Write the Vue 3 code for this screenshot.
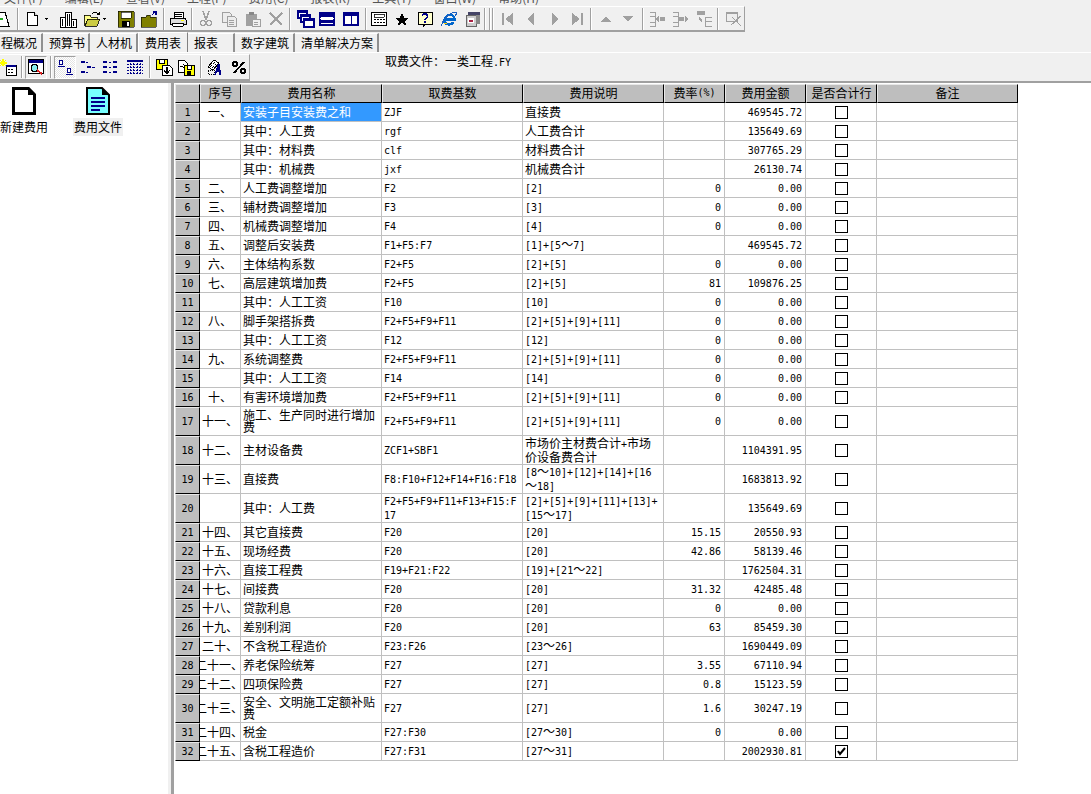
<template>
  <div class="app">
    <div class="menu">
      <span v-for="m in menus" :key="m">{{ m }}</span>
    </div>

    <div class="toolbar main-bar">
      <template v-for="(item, i) in placedMain" :key="i">
        <i v-if="item.sep" class="sep" :style="{ marginLeft: item.ml + 'px' }"></i>
        <svg
          v-else
          class="icon"
          viewBox="0 0 16 16"
          :width="item.w"
          height="16"
          :style="{ marginLeft: item.ml + 'px' }"
          v-html="icons[item.icon]"
        ></svg>
      </template>
    </div>

    <div class="tabs">
      <div
        v-for="t in tabs"
        :key="t.name"
        class="tab"
        :class="{ active: t.active }"
        :style="{ width: t.w + 'px' }"
      >
        {{ t.name }}
      </div>
    </div>

    <div class="sub-row">
      <div class="toolbar sub-bar">
        <template v-for="(item, i) in placedSub" :key="i">
          <i v-if="item.sep" class="sep" :style="{ marginLeft: item.ml + 'px' }"></i>
          <span
            v-else
            class="tool"
            :class="{ pressed: item.pressed, dither: item.dither }"
            :style="{ marginLeft: item.ml + 'px', width: item.w + 'px' }"
          >
            <svg class="icon" viewBox="0 0 16 16" width="16" height="16" v-html="icons[item.icon]"></svg>
          </span>
        </template>
      </div>
      <div class="file-name">
        取费文件：一类工程<span class="lat">.FY</span>
      </div>
    </div>

    <div class="body">
      <aside class="side">
        <div class="side-item">
          <svg viewBox="0 0 24 28" width="24" height="28">
            <path d="M1.5 1.5h15l6 6v19h-21z" fill="#fff" stroke="#000" stroke-width="3" />
            <path d="M16 1v7h7" fill="#000" />
          </svg>
          <span>新建费用</span>
        </div>
        <div class="side-item">
          <svg viewBox="0 0 24 28" width="24" height="28">
            <path d="M1 1h15l7 7v19H1z" fill="#7ff" stroke="#000" stroke-width="2" />
            <path d="M16 1v7h7" fill="#000" />
            <path d="M5 10h14v2H5zM5 14h14v2H5zM5 18h14v2H5zM5 22h9v2H5z" fill="#008" />
          </svg>
          <span class="selected-label">费用文件</span>
        </div>
      </aside>

      <div class="splitter"></div>

      <div class="grid">
        <div class="row head-row">
          <div class="rh corner"></div>
          <div v-for="h in headers" :key="h" class="hc">
            <span v-for="p in parts(h)" :key="p.t" :class="{ lat: p.lat }">{{ p.t }}</span>
          </div>
        </div>

        <div v-for="(r, i) in rows" :key="i" class="row" :class="{ tall: r.tall }">
          <div class="rh"><span class="lat">{{ i + 1 }}</span></div>
          <div class="cell no" :class="{ over: r.no.length > 3 }">{{ r.no }}</div>
          <div class="cell" :class="{ sel: i === 0 }"><div class="txt">{{ r.name }}</div></div>
          <div class="cell">
            <div class="txt">
              <span v-for="p in parts(r.base)" :key="p.t" :class="{ lat: p.lat }">{{ p.t }}</span>
            </div>
          </div>
          <div class="cell">
            <div class="txt">
              <span v-for="(p, k) in parts(r.desc)" :key="k" :class="{ lat: p.lat }">{{ p.t }}</span>
            </div>
          </div>
          <div class="cell right"><span class="lat">{{ r.rate }}</span></div>
          <div class="cell right"><span class="lat">{{ r.amount }}</span></div>
          <div class="cell center">
            <span class="check">
              <svg v-if="i === rows.length - 1" viewBox="0 0 11 11" width="11" height="11">
                <path d="M2 5l2 3 5-6" fill="none" stroke="#000" stroke-width="2" />
              </svg>
            </span>
          </div>
          <div class="cell"></div>
        </div>
      </div>
    </div>
  </div>
</template>

<script setup>
const menus = ['文件(F)', '编辑(E)', '查看(V)', '工程(P)', '费用(C)', '报表(R)', '工具(T)', '窗口(W)', '帮助(H)']

const D = '#a0a0a0'
const icons = {
  map: '<path d="M1 1h10l4 14H5z" fill="#fff" stroke="#000"/><path d="M3 4h3v2H3z" fill="#d22"/><path d="M6 7h3v2H6z" fill="#2a2"/><path d="M3 8h2v2H3z" fill="#dc2"/>',
  doc: '<path d="M2.5 1.5h7l3 3v10h-10z" fill="#fff" stroke="#000"/><path d="M9.5 1.500v3h3" fill="#ccc" stroke="#000"/>',
  drop: '<path d="M0 6h7L3.5 10z" fill="#000"/>',
  building: '<path d="M0 6h5v10H0zM5 1h6v15H5zM11 8h5v8h-5z" fill="#fff" stroke="#000"/><path d="M2 8h1v7H2zM7 3h1v12H7zM9 3h1v12H9zM13 10h1v5h-1z" fill="#000"/>',
  open: '<path d="M0 4h6l1 2h6v2H4L1 14H0z" fill="#ff8" stroke="#000" stroke-width=".8"/><path d="M4 8h12l-3 7H1z" fill="#cc4" stroke="#000" stroke-width=".8"/><path d="M8 3c1-2 4-3 6 0" fill="none" stroke="#000"/><path d="M12 4h4V1z" fill="#000"/>',
  save: '<path d="M0 0h15l1 1v15H0z" fill="#808000" stroke="#000" stroke-width=".6"/><path d="M3 1h10v6H3z" fill="#fff" stroke="#000" stroke-width=".6"/><path d="M4 10h8v6H4z" fill="#000"/><path d="M9 11h2v4H9z" fill="#fff"/>',
  folder: '<path d="M0 6h5l1-2h3v2h6v10H0z" fill="#808000" stroke="#000" stroke-width=".6"/><path d="M11 4l3-3M12 1h3v3" fill="none" stroke="#008" stroke-width="1.4"/>',
  print: '<path d="M4 1h9v6H4z" fill="#fff" stroke="#000"/><path d="M1 7h14l1 2v4H0V9z" fill="#ddd" stroke="#000"/><path d="M2 12h12l-1 3H3z" fill="#fff" stroke="#000"/><path d="M5 3h7M5 5h7" stroke="#000"/><path d="M11 9h3v1h-3z" fill="#ff0"/>',
  cut: `<path d="M5 0l3 9M11 0L8 9" stroke="${D}" stroke-width="1.4" fill="none"/><circle cx="5" cy="12" r="2.4" fill="none" stroke="${D}" stroke-width="1.4"/><circle cx="11" cy="12" r="2.4" fill="none" stroke="${D}" stroke-width="1.4"/>`,
  copy: `<path d="M1 1h7l2 2v8H1z" fill="#ececec" stroke="${D}"/><path d="M6 5h7l2 2v8H6z" fill="#ececec" stroke="${D}"/><path d="M8 9h5M8 11h5M8 13h5" stroke="${D}"/>`,
  paste: `<path d="M1 3h11v12H1z" fill="${D}"/><path d="M4 1h5v3H4z" fill="#888"/><path d="M7 8h8v7H7z" fill="#f0f0f0" stroke="${D}"/><path d="M9 11h4M9 13h4" stroke="${D}"/>`,
  cross: `<path d="M2 2l12 12M14 2L2 14" stroke="${D}" stroke-width="2.4"/>`,
  cascade: '<path d="M0 0h9v7H0z" fill="#fff" stroke="#008" stroke-width="1.4"/><path d="M0 0h9v2H0z" fill="#008"/><path d="M3 4h9v7H3z" fill="#fff" stroke="#008" stroke-width="1.4"/><path d="M3 4h9v2H3z" fill="#008"/><path d="M6 8h10v8H6z" fill="#fff" stroke="#008" stroke-width="1.4"/><path d="M6 8h10v2H6z" fill="#008"/>',
  hsplit: '<path d="M1 2h14v12H1z" fill="#fff" stroke="#008" stroke-width="2"/><path d="M1 3h14v3H1zM1 9h14v3H1z" fill="#008"/><path d="M1 7h14v1H1z" fill="#fff"/>',
  vsplit: '<path d="M1 2h14v12H1z" fill="#fff" stroke="#008" stroke-width="2"/><path d="M1 2h14v3H1zM7.5 2h1v12h-1z" fill="#008"/>',
  calc: '<path d="M.5 1.5h15v13H.5z" fill="#fff" stroke="#000"/><path d="M3 3h10v3H3z" fill="#fff" stroke="#000" stroke-width=".8"/><path d="M3 8h2v1H3zM6 8h2v1H6zM9 8h2v1H9zM12 8h2v1h-2zM3 11h2v1H3zM6 11h2v1H6zM9 11h2v1H9zM12 11h2v1h-2z" fill="#000"/>',
  star: '<path d="M8 2l2 4.5h5L11 10l1.5 5L8 12l-4.500 3L5 10 1 6.500h5z" fill="#000"/>',
  help: '<path d="M1 1h14v12H8l-2 3v-3H1z" fill="#ffc" stroke="#000"/><path d="M5.500 5c0-3 5-3 5 0 0 2-2.500 2-2.500 4" fill="none" stroke="#008" stroke-width="1.6"/><path d="M7 10h2v2H7z" fill="#008"/>',
  ie: '<path d="M3.500 8.500h10C13.500 3 6 2 3.500 8.500c-1.500 4 5 7 9 3" fill="none" stroke="#06c" stroke-width="2.400"/><path d="M1 15C0 11 8 1 15 1c1 1 0 3-1 4" fill="none" stroke="#1a5fc0"/><path d="M3 12h3" stroke="#fc0"/>',
  app: '<path d="M1 4h10v11H1z" fill="#ccc" stroke="#666"/><path d="M3 1h12v3H3z" fill="#446"/><path d="M11 4h4v9h-4z" fill="#888"/><path d="M3 7h6v5H3z" fill="#fff"/><path d="M4 9h4v2H4z" fill="#a24"/>',
  first: `<path d="M2 2h2v12H2zM13 2v12L5 8z" fill="${D}"/>`,
  prev: `<path d="M11 2v12L4 8z" fill="${D}"/>`,
  next: `<path d="M5 2v12l7-6z" fill="${D}"/>`,
  last: `<path d="M3 2v12l8-6zM12 2h2v12h-2z" fill="${D}"/>`,
  up: `<path d="M3 11h10L8 5z" fill="${D}"/>`,
  down: `<path d="M3 5h10l-5 6z" fill="${D}"/>`,
  out1: `<path d="M0 1h5v4H0M0 11h5v4H0M5 5v6" fill="none" stroke="${D}"/><path d="M5 8l4-3v6zM10 6h5v4h-5z" fill="${D}"/>`,
  out2: `<path d="M0 1h5v4H0M0 11h5v4H0M5 5v6" fill="none" stroke="${D}"/><path d="M6 6h5v4H6zM16 8l-4-3v6z" fill="${D}"/>`,
  tree: `<path d="M1 0h8v4H1z" fill="${D}"/><path d="M3 5v4l3 3V9z" fill="${D}"/><path d="M9 6h7M9 6v9h7M9 10h7" fill="none" stroke="${D}"/>`,
  del: `<path d="M0 1h11v9H0z" fill="#eee" stroke="${D}"/><path d="M0 1h11v2H0z" fill="${D}"/><path d="M5 14l10-9M6 6l9 9" stroke="${D}" stroke-width="1.3"/>`,
  calnew: '<path d="M6 6h10v10H6z" fill="#fff" stroke="#000"/><path d="M6 6h10v2H6z" fill="#008"/><path d="M8 10h2v1H8zM11 10h2v1h-2zM8 13h2v1H8zM11 13h2v1h-2z" fill="#000"/><path d="M3 0v7M0 4h7M0 1l6 6M6 1L0 7" stroke="#ff0" stroke-width="1.200"/>',
  search: '<path d="M.5 .5h15v14H.5z" fill="#fff" stroke="#000"/><path d="M1 1h14v3H1z" fill="#008"/><circle cx="6.500" cy="9" r="3.500" fill="#8ee" stroke="#000"/><path d="M9 11l5 4" stroke="#d22" stroke-width="2"/>',
  level1: '<path d="M2.500 1.500h3v4h-3zM10.500 9.500h3v4h-3z" fill="#fff" stroke="#008"/><path d="M1 7h7v1H1zM9 15h7v1H9z" fill="#008"/>',
  level2: '<path d="M1 2h4v2H1zM6 3h2v1H6zM7 7h4v2H7zM12 8h3v1h-3zM1 12h4v2H1zM6 13h2v1H6z" fill="#008"/>',
  level3: '<path d="M0 2h4v2H0zM6 3h2v1H6zM10 2h4v2h-4zM0 7h4v2H0zM6 8h2v1H6zM10 7h4v2h-4zM0 12h4v2H0zM6 13h2v1H6zM10 12h4v2h-4z" fill="#008"/>',
  level4: '<path d="M0 1h16v2H0z" fill="#008"/><path d="M0 5h16M0 8h16M0 11h16M0 14h16M3 4v11M6 4v11M10 4v11M13 4v11" stroke="#008" stroke-dasharray="2 1"/>',
  fileIn: '<path d="M0 0h11v10H0z" fill="#ff0" stroke="#000"/><path d="M3 0h5v4H3z" fill="#fff" stroke="#000"/><path d="M6 6h7l3 3v7H6z" fill="#fff" stroke="#000"/><path d="M11 8v6M8.500 11.500l2.500 3 2.500-3" fill="none" stroke="#000" stroke-width="1.300"/>',
  fileOut: '<path d="M0 1h6l3 3v9H0z" fill="#fff" stroke="#000"/><path d="M2 7h3M5 5l2 2-2 2" fill="none" stroke="#000"/><path d="M6 6h10v10H6z" fill="#ff0" stroke="#000"/><path d="M9 6h4v4H9z" fill="#fff" stroke="#000"/><path d="M9 12h4v4H9z" fill="#000"/>',
  fontA: '<path d="M1 8l6-7 5 3-6 7z" fill="#fff" stroke="#000"/><path d="M3 8l5-5M5 9l4-4M1 11h6v4H1z" stroke="#000" fill="none" stroke-dasharray="1 1"/><path d="M7 16l4-11h2l1 11h-2v-3h-2l-1 3z" fill="#008"/>',
  percent: '<circle cx="4" cy="5" r="2.400" fill="none" stroke="#000" stroke-width="1.600"/><circle cx="12" cy="12" r="2.400" fill="none" stroke="#000" stroke-width="1.600"/><path d="M3 14L13 3" stroke="#000" stroke-width="1.800"/>',
}

// x is where the item sits on the bar, the margin to the previous item is worked out from it
function place(items, sepWidth) {
  let end = 0
  return items.map((it) => {
    const w = it.sep ? sepWidth : it.w || 16
    const out = { ...it, w, ml: it.x - end }
    end = it.x + w
    return out
  })
}

const placedMain = place(
  [
    { x: -6, icon: 'map' },
    { x: 17, sep: true },
    { x: 25, icon: 'doc' },
    { x: 45, icon: 'drop', w: 8 },
    { x: 60, icon: 'building' },
    { x: 84, icon: 'open' },
    { x: 103, icon: 'drop', w: 8 },
    { x: 118, icon: 'save' },
    { x: 141, icon: 'folder' },
    { x: 163, sep: true },
    { x: 170, icon: 'print' },
    { x: 191, sep: true },
    { x: 198, icon: 'cut' },
    { x: 221, icon: 'copy' },
    { x: 245, icon: 'paste' },
    { x: 268, icon: 'cross' },
    { x: 289, sep: true },
    { x: 298, icon: 'cascade' },
    { x: 319, icon: 'hsplit' },
    { x: 343, icon: 'vsplit' },
    { x: 365, sep: true },
    { x: 371, icon: 'calc' },
    { x: 394, icon: 'star' },
    { x: 417, icon: 'help' },
    { x: 441, icon: 'ie' },
    { x: 465, icon: 'app' },
    { x: 484, sep: true },
    { x: 489, sep: true },
    { x: 492, sep: true },
    { x: 500, icon: 'first' },
    { x: 523, icon: 'prev' },
    { x: 547, icon: 'next' },
    { x: 569, icon: 'last' },
    { x: 590, sep: true },
    { x: 598, icon: 'up' },
    { x: 620, icon: 'down' },
    { x: 642, sep: true },
    { x: 650, icon: 'out1' },
    { x: 673, icon: 'out2' },
    { x: 696, icon: 'tree' },
    { x: 717, sep: true },
    { x: 726, icon: 'del' },
  ],
  2,
)

const placedSub = place(
  [
    { x: 0, icon: 'calnew' },
    { x: 21, sep: true },
    { x: 25, icon: 'search', w: 22, pressed: true },
    { x: 50, sep: true },
    { x: 54, icon: 'level1', w: 22, pressed: true, dither: true },
    { x: 80, icon: 'level2' },
    { x: 103, icon: 'level3' },
    { x: 127, icon: 'level4' },
    { x: 149, sep: true },
    { x: 156, icon: 'fileIn' },
    { x: 178, icon: 'fileOut' },
    { x: 200, sep: true },
    { x: 207, icon: 'fontA' },
    { x: 231, icon: 'percent' },
  ],
  2,
)

const tabs = [
  { name: '程概况', w: 43 },
  { name: '预算书', w: 47 },
  { name: '人材机', w: 48 },
  { name: '费用表', w: 50, active: true },
  { name: '报表', w: 47 },
  { name: '数字建筑', w: 60 },
  { name: '清单解决方案', w: 84 },
]

const headers = ['序号', '费用名称', '取费基数', '费用说明', '费率(%)', '费用金额', '是否合计行', '备注']

const row = (no, name, base, desc, rate, amount, tall) => ({ no, name, base, desc, rate, amount, tall })
const rows = [
  row('一、', '安装子目安装费之和', 'ZJF', '直接费', '', '469545.72'),
  row('', '其中：人工费', 'rgf', '人工费合计', '', '135649.69'),
  row('', '其中：材料费', 'clf', '材料费合计', '', '307765.29'),
  row('', '其中：机械费', 'jxf', '机械费合计', '', '26130.74'),
  row('二、', '人工费调整增加', 'F2', '[2]', '0', '0.00'),
  row('三、', '辅材费调整增加', 'F3', '[3]', '0', '0.00'),
  row('四、', '机械费调整增加', 'F4', '[4]', '0', '0.00'),
  row('五、', '调整后安装费', 'F1+F5:F7', '[1]+[5～7]', '', '469545.72'),
  row('六、', '主体结构系数', 'F2+F5', '[2]+[5]', '0', '0.00'),
  row('七、', '高层建筑增加费', 'F2+F5', '[2]+[5]', '81', '109876.25'),
  row('', '其中：人工工资', 'F10', '[10]', '0', '0.00'),
  row('八、', '脚手架搭拆费', 'F2+F5+F9+F11', '[2]+[5]+[9]+[11]', '0', '0.00'),
  row('', '其中：人工工资', 'F12', '[12]', '0', '0.00'),
  row('九、', '系统调整费', 'F2+F5+F9+F11', '[2]+[5]+[9]+[11]', '0', '0.00'),
  row('', '其中：人工工资', 'F14', '[14]', '0', '0.00'),
  row('十、', '有害环境增加费', 'F2+F5+F9+F11', '[2]+[5]+[9]+[11]', '0', '0.00'),
  row('十一、', '施工、生产同时进行增加费', 'F2+F5+F9+F11', '[2]+[5]+[9]+[11]', '0', '0.00', true),
  row('十二、', '主材设备费', 'ZCF1+SBF1', '市场价主材费合计+市场价设备费合计', '', '1104391.95', true),
  row('十三、', '直接费', 'F8:F10+F12+F14+F16:F18', '[8～10]+[12]+[14]+[16～18]', '', '1683813.92', true),
  row('', '其中：人工费', 'F2+F5+F9+F11+F13+F15:F17', '[2]+[5]+[9]+[11]+[13]+[15～17]', '', '135649.69', true),
  row('十四、', '其它直接费', 'F20', '[20]', '15.15', '20550.93'),
  row('十五、', '现场经费', 'F20', '[20]', '42.86', '58139.46'),
  row('十六、', '直接工程费', 'F19+F21:F22', '[19]+[21～22]', '', '1762504.31'),
  row('十七、', '间接费', 'F20', '[20]', '31.32', '42485.48'),
  row('十八、', '贷款利息', 'F20', '[20]', '0', '0.00'),
  row('十九、', '差别利润', 'F20', '[20]', '63', '85459.30'),
  row('二十、', '不含税工程造价', 'F23:F26', '[23～26]', '', '1690449.09'),
  row('二十一、', '养老保险统筹', 'F27', '[27]', '3.55', '67110.94'),
  row('二十二、', '四项保险费', 'F27', '[27]', '0.8', '15123.59'),
  row('二十三、', '安全、文明施工定额补贴费', 'F27', '[27]', '1.6', '30247.19', true),
  row('二十四、', '税金', 'F27:F30', '[27～30]', '0', '0.00'),
  row('二十五、', '含税工程造价', 'F27:F31', '[27～31]', '', '2002930.81'),
]

// latin runs are set smaller in a mono face so they get half the width of a hanzi
function parts(text) {
  return String(text)
    .split(/([\x00-\x7f]+)/)
    .filter(Boolean)
    .map((t) => ({ t, lat: /^[\x00-\x7f]/.test(t) }))
}
</script>

<style>
html,
body {
  margin: 0;
  overflow: hidden;
}
</style>

<style scoped>
.app {
  width: 1091px;
  height: 794px;
  overflow: hidden;
  display: flex;
  flex-direction: column;
  background: #f0f0f0;
  color: #000;
  font: 12px/12px "Noto Sans CJK SC", "Liberation Sans", sans-serif;
}

.lat {
  font-family: "DejaVu Sans Mono", monospace;
  font-size: 10px;
}

.menu {
  height: 6px;
  flex: none;
  overflow: hidden;
  display: flex;
  gap: 22px;
  padding-left: 4px;
  color: #555;
}

.menu span {
  margin-top: -8px;
}

.toolbar {
  display: flex;
  align-items: center;
  box-sizing: border-box;
  flex: none;
  background: #f0f0f0;
  border-top: 1px solid #fff;
  border-bottom: 2px solid #a0a0a0;
  border-right: 1px solid #a0a0a0;
}

.main-bar {
  width: 745px;
  height: 26px;
}

.sep {
  display: block;
  flex: none;
  width: 2px;
  height: 22px;
  box-sizing: border-box;
  border-left: 1px solid #a0a0a0;
  border-right: 1px solid #fff;
}

.icon {
  flex: none;
  display: block;
  overflow: visible;
  shape-rendering: crispEdges;
}

.tabs {
  display: flex;
  flex: none;
  height: 20px;
  box-sizing: border-box;
  padding-top: 1px;
}

.tab {
  box-sizing: border-box;
  height: 19px;
  flex: none;
  display: flex;
  align-items: center;
  padding-left: 6px;
  white-space: nowrap;
  border-top: 1px solid #fff;
  border-right: 2px solid #909090;
}

.tab:first-child {
  padding-left: 1px;
}

.tab.active {
  height: 20px;
  margin-top: -1px;
  border-left: 1px solid #fff;
  border-right: 1px solid #808080;
}

.sub-row {
  display: flex;
  flex: none;
  height: 29px;
  border-top: 1px solid #fff;
  box-sizing: border-box;
}

.sub-bar {
  width: 250px;
  height: 27px;
  margin-top: 1px;
}

.file-name {
  margin-left: 135px;
  padding-top: 2px;
}

.tool {
  flex: none;
  display: flex;
  align-items: center;
  justify-content: center;
  height: 23px;
  box-sizing: border-box;
}

.tool.pressed {
  border: 1px solid;
  border-color: #a0a0a0 #fff #fff #a0a0a0;
}

.tool.dither {
  background: repeating-conic-gradient(#fff 0 25%, #e4e4e4 0 50%) 0 0 / 2px 2px;
}

.body {
  flex: 1;
  display: flex;
  min-height: 0;
  background: #fff;
  border-top: 2px solid #a0a0a0;
}

.side {
  width: 168px;
  flex: none;
  display: flex;
  gap: 24px;
  padding-top: 4px;
  box-sizing: border-box;
  background: #fff;
}

.side-item {
  width: 50px;
  display: flex;
  flex-direction: column;
  align-items: center;
  gap: 3px;
}

.side-item:first-child {
  margin-left: -1px;
}

.side-item span {
  padding: 3px 1px;
  white-space: nowrap;
}

.selected-label {
  background: #f0f0f0;
}

.splitter {
  width: 6px;
  flex: none;
  box-sizing: border-box;
  background: #f0f0f0;
  border-right: 3px solid #a0a0a0;
}

.grid {
  margin: 1px 0 0 1px;
  flex: none;
}

.row {
  display: grid;
  grid-template-columns: 25px 41px 141px 141px 141px 61px 81px 71px 141px;
  height: 19px;
}

.row.tall {
  height: 29px;
}

.rh,
.hc {
  box-sizing: border-box;
  background: #bebebe;
  display: flex;
  align-items: center;
  justify-content: center;
  border-top: 1px solid #e8e8e8;
  border-left: 1px solid #e8e8e8;
  border-right: 1px solid #000;
  border-bottom: 1px solid #000;
}

.hc {
  padding-bottom: 2px;
  white-space: nowrap;
}

.cell {
  box-sizing: border-box;
  display: flex;
  align-items: center;
  padding: 0 3px 0 2px;
  overflow: hidden;
  background: #fff;
  border-right: 1px solid #c0c0c0;
  border-bottom: 1px solid #c0c0c0;
}

.txt {
  min-width: 0;
  word-break: break-all;
}

.no {
  justify-content: center;
  padding: 0;
  white-space: nowrap;
}

.no.over {
  justify-content: flex-end;
}

/* four characters do not fit: the text runs past the cell on both sides, mostly the left */
.no.over::after {
  content: "";
  margin-left: -3px;
}

.sel {
  background: #3399ff;
  color: #fff;
}

.right {
  justify-content: flex-end;
}

.right .lat {
  padding-top: 2px;
}

.center {
  justify-content: center;
  padding: 0;
}

.check {
  width: 13px;
  height: 13px;
  box-sizing: border-box;
  border: 1px solid #000;
  display: block;
  flex: none;
}

.check svg {
  display: block;
}
</style>
